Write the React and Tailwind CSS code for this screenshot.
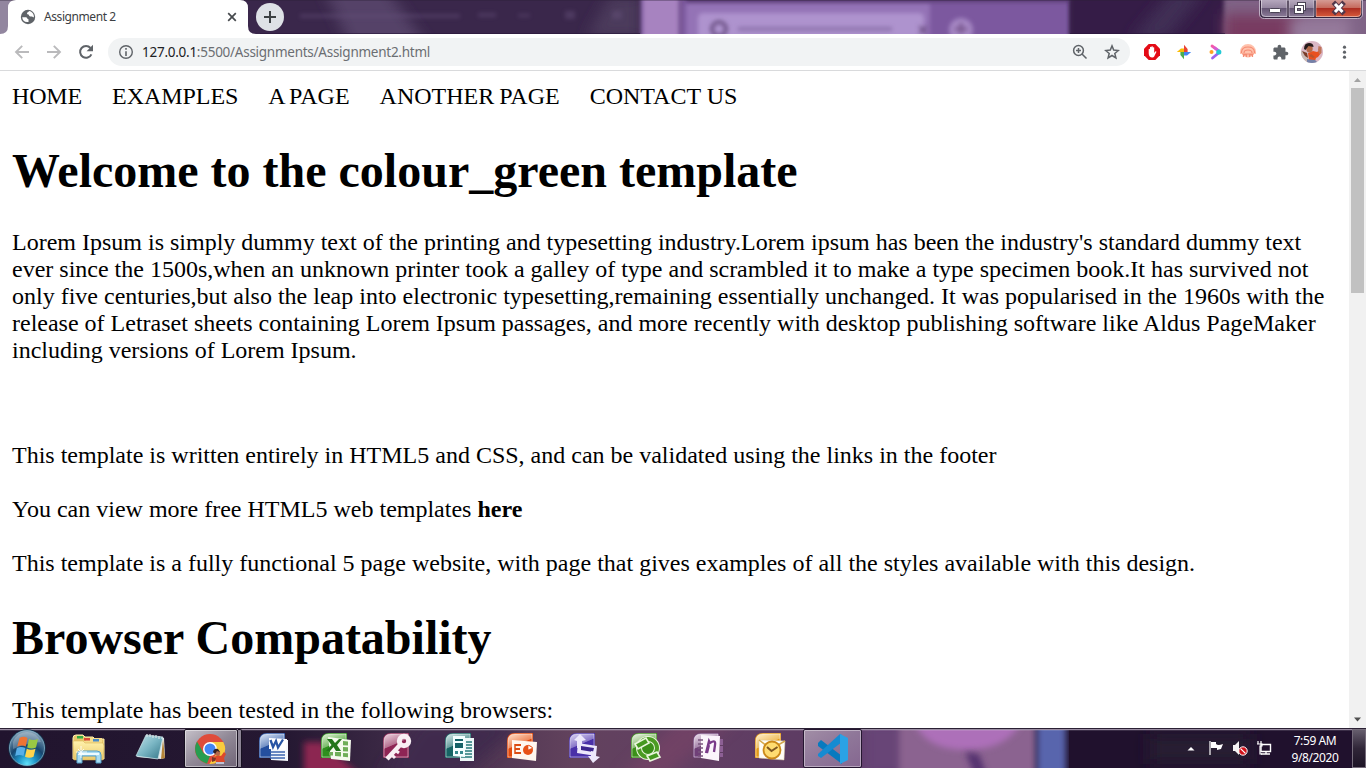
import React from 'react';

const ui = "font-['Noto_Sans','Open_Sans',sans-serif]";

function TitleWallpaper() {
  return (
    <svg className="absolute inset-0" width="1366" height="34" viewBox="0 0 1366 34" preserveAspectRatio="none">
      <defs>
        <filter id="tb" filterUnits="userSpaceOnUse" x="0" y="-20" width="1366" height="80"><feGaussianBlur stdDeviation="2" /></filter>
        <filter id="tb5" filterUnits="userSpaceOnUse" x="0" y="-40" width="1366" height="120"><feGaussianBlur stdDeviation="7" /></filter>
      </defs>
      <rect width="1366" height="34" fill="#3a274b" />
      <rect width="12" height="34" fill="#92869f" />
      <path d="M320-20h60l50 70h-78z" fill="#554268" filter="url(#tb5)" />
      <path d="M610-4h30v42h-54z" fill="#4c3b5b" filter="url(#tb5)" />
      <g fill="#66517b" opacity=".45" filter="url(#tb)">
        <rect x="300" y="14" width="160" height="4" />
        <path d="M478 13h18v4h-18zM518 14h12v3h-12zM565 11h10v8h-10zM612 11h10v8h-10z" />
      </g>
      <rect x="641" y="-10" width="429" height="54" fill="#7c599f" filter="url(#tb)" />
      <rect x="643" y="-10" width="37" height="54" fill="#a783c0" filter="url(#tb)" />
      <rect x="679" y="-10" width="4" height="54" fill="#775593" filter="url(#tb)" />
      <rect x="686" y="3" width="244" height="40" fill="#9473b6" filter="url(#tb)" />
      <rect x="698" y="13" width="226" height="40" rx="5" fill="#ae93ce" filter="url(#tb)" />
      <rect x="686" y="-8" width="384" height="10" fill="#563a71" filter="url(#tb)" />
      <circle cx="719" cy="29" r="7" fill="none" stroke="#705489" strokeWidth="4" filter="url(#tb)" />
      <rect x="738" y="27" width="154" height="4" fill="#8267a0" filter="url(#tb)" opacity=".7" />
      <path d="M919 26l8 8m0-8l-8 8" stroke="#68487f" strokeWidth="2" filter="url(#tb)" />
      <circle cx="961" cy="30" r="12" fill="#a486c2" filter="url(#tb)" />
      <path d="M955 29h12m-6-6v11" stroke="#79598f" strokeWidth="3" filter="url(#tb)" />
      <rect x="1070" y="-10" width="156" height="54" fill="#341f46" filter="url(#tb)" />
      <path d="M1130 40l42-50h34l-40 50z" fill="#412d55" filter="url(#tb5)" />
      <rect x="1224" y="-10" width="160" height="60" fill="#7f6486" filter="url(#tb)" />
      <rect x="1224" y="14" width="75" height="40" fill="#783a60" filter="url(#tb5)" />
      <rect x="1290" y="18" width="60" height="26" fill="#967a9b" filter="url(#tb5)" />
      <path d="M0 .5h1366" stroke="#2b2035" opacity=".35" />
      <path d="M260 33.500h380M1070 33.500h155" stroke="#28163a" opacity=".6" />
    </svg>
  );
}

function WindowControls() {
  return (
    <svg className="relative -mr-px" width="108" height="20" viewBox="0 0 108 20">
      <defs>
        <linearGradient id="glass" x1="0" x2="0" y1="0" y2="1"><stop offset="0" stopColor="#b5a7bd" /><stop offset=".47" stopColor="#94859f" /><stop offset=".5" stopColor="#665675" /><stop offset="1" stopColor="#8b7b98" /></linearGradient>
        <linearGradient id="closeG" x1="0" x2="0" y1="0" y2="1"><stop offset="0" stopColor="#d59b94" /><stop offset=".45" stopColor="#c66b5e" /><stop offset=".5" stopColor="#ad2e22" /><stop offset="1" stopColor="#d85b3c" /></linearGradient>
      </defs>
      <path d="M.5 0v14q0 4.500 5 4.500h93q5 0 5-4.500V0z" fill="#352540" stroke="#e0d4e5" strokeOpacity=".75" />
      <path d="M2 0h26v17H6q-4 0-4-4z" fill="url(#glass)" />
      <path d="M30 0h25v17H30z" fill="url(#glass)" />
      <path d="M57 0h45v13q0 4-4 4H57z" fill="url(#closeG)" />
      <path d="M2.500 0v13q0 3.500 4 3.500H28V0m2 0v16.500h25V0m2 0v16.500h41q4 0 4-3.500V0" fill="none" stroke="#fff" strokeOpacity=".45" />
      <rect x="10.500" y="8.500" width="11" height="4" rx="1" fill="#fff" stroke="#4a4355" />
      <rect x="38.500" y="2.500" width="8" height="8" fill="#fff" stroke="#4a4355" />
      <rect x="35.500" y="5.500" width="9" height="8" fill="#fff" stroke="#4a4355" />
      <rect x="38.500" y="8.500" width="3" height="2" fill="#81738e" stroke="#4a4355" />
      <path d="M76 4l7.500 8m0-8l-7.500 8" stroke="#51374a" strokeWidth="4.800" strokeLinecap="square" />
      <path d="M76 4l7.500 8m0-8l-7.500 8" stroke="#fff" strokeWidth="3" />
    </svg>
  );
}

function TabStrip() {
  return (
    <div className="relative flex h-[34px] shrink-0 overflow-hidden">
      <TitleWallpaper />
      <div className="relative flex h-[34px] w-[256px] shrink-0 items-center pl-5">
        <svg className="absolute left-0 top-0" width="256" height="34" viewBox="0 0 256 34"><path d="M0 34q8 0 8-8V8q0-8 8-8h224q8 0 8 8v18q0 8 8 8z" fill="#fff" /></svg>
        <svg className="relative" width="16" height="16" viewBox="0 0 16 16">
          <circle cx="8" cy="8" r="7.200" fill="#5f6368" />
          <path d="M2.200 8.200h3.600c1.700 0 1.200 2 2.700 2v2.700c-3.700.8-6-1.500-6.300-4.700zM9 1.900c-.2 1.500-2 .8-2 2.300 0 .9.800 1.300 1.600 1.300.5 1.700 1.500 2 3 2 .9 0 1.200.8 2.300.8.4-3-1.700-5.700-4.900-6.400z" fill="#fff" />
        </svg>
        <span className={`relative ml-2 w-[180px] whitespace-nowrap text-[12px] tracking-[-0.42px] text-[#3c4043] ${ui}`}>Assignment 2</span>
        <svg className="relative" width="16" height="16" viewBox="0 0 16 16"><path d="M4.200 4.200l7.600 7.600m0-7.600l-7.600 7.600" stroke="#46494d" strokeWidth="1.700" /></svg>
      </div>
      <svg className="relative mt-[3px]" width="28" height="28" viewBox="0 0 28 28"><circle cx="14" cy="14" r="14" fill="#dee1e6" /><path d="M8 14h12M14 8v12" stroke="#3c4043" strokeWidth="2" /></svg>
      <div className="grow" />
      <WindowControls />
    </div>
  );
}

function Avatar() {
  return (
    <svg width="22" height="22" viewBox="0 0 22 22">
      <defs><clipPath id="av"><circle cx="11" cy="11" r="11" /></clipPath></defs>
      <g clipPath="url(#av)">
        <rect width="22" height="22" fill="#dab7c5" />
        <path d="M0 10l6 1 2 11H0z" fill="#c9b9b4" />
        <path d="M7 12l5-2 4 1 3-2 1 3-3 4-2 1-1 3-6-1z" fill="#e8501f" />
        <path d="M17.500 5l3 1v6l-2.500 1-1-4z" fill="#c07458" />
        <ellipse cx="8.500" cy="7.800" rx="3.200" ry="3.600" fill="#b56a49" />
        <path d="M3 8q0-6 5-6 4.500 0 4.500 4l-5-1-3 4z" fill="#271b1c" />
        <path d="M1 10l5 2 1 5-3-2z" fill="#7a3c28" />
        <path d="M6 18l8 1 3 3H6z" fill="#7581a8" />
        <path d="M10 13l4 3-2 1-4-2z" fill="#b9532e" />
      </g>
    </svg>
  );
}

function Toolbar() {
  return (
    <div className="flex h-9 shrink-0 items-center bg-white pl-[14px]">
      <svg width="16" height="16" viewBox="0 0 16 16" fill="none" stroke="#bababc" strokeWidth="1.900"><path d="M15 8H2.300M8.200 1.800L2 8l6.200 6.200" /></svg>
      <svg className="ml-4" width="16" height="16" viewBox="0 0 16 16" fill="none" stroke="#bababc" strokeWidth="1.900"><path d="M1 8h12.700M7.800 1.800L14 8l-6.200 6.200" /></svg>
      <svg className="ml-4" width="16" height="16" viewBox="0 0 16 16"><path d="M13.400 10.300A5.900 5.900 0 1 1 12.500 4" fill="none" stroke="#5f6368" strokeWidth="2" /><path d="M15 .8v6.400H8.600z" fill="#5f6368" /></svg>
      <div className="ml-[14px] flex h-7 w-[1022px] items-center rounded-full bg-[#f1f3f4] pl-[10px]">
        <svg width="16" height="16" viewBox="0 0 16 16"><circle cx="8" cy="8" r="6.300" fill="none" stroke="#5f6368" strokeWidth="1.400" /><path d="M8 7.200V12M8 4v1.800" stroke="#5f6368" strokeWidth="1.600" /></svg>
        <span className={`ml-2 grow whitespace-nowrap text-[13.5px] tracking-[-0.26px] text-[#6b6e72] ${ui}`}><span className="text-[#202124]">127.0.0.1</span>:5500/Assignments/Assignment2.html</span>
        <svg width="16" height="16" viewBox="0 0 16 16" fill="none" stroke="#5f6368" strokeWidth="1.500"><circle cx="6.500" cy="6.500" r="4.900" /><path d="M10 10l4.500 4.500M4 6.500h5M6.500 4v5" /></svg>
        <svg className="ml-4 mr-[10px]" width="16" height="16" viewBox="0 0 16 16"><path d="M8 1.900l1.700 4.200 4.600.4-3.500 3 1.100 4.400L8 11.500l-3.900 2.400 1.100-4.400-3.500-3 4.600-.4z" fill="none" stroke="#5f6368" strokeWidth="1.500" /></svg>
      </div>
      <svg className="ml-[14px]" width="16" height="16" viewBox="0 0 16 16"><path d="M4.700 0h6.600L16 4.700v6.600L11.300 16H4.700L0 11.300V4.700z" fill="#e40b16" /><path d="M4.700 9.500V5.200q.7-.9 1.300 0V8V3.200q.7-.8 1.400 0V7.500V2.600q.7-.8 1.400 0V7.500V3.500q.8-.7 1.400 0V9l1.300-1.700q1-.3.900.6L10.200 12.500q-.6 1.100-1.900 1.100-3.400 0-3.600-4.100z" fill="#fff" /></svg>
      <svg className="ml-4" width="16" height="16" viewBox="0 0 16 16"><path d="M8 8V.8L11.600 5V8z" fill="#ea4335" /><path d="M8 8V4.500h6.500L11.500 8z" fill="#ea4335" opacity="0" /><path d="M8 8h7.200L11 11.600H8z" fill="#4285f4" /><path d="M8 8v7.200L4.400 11V8z" fill="#4caf50" /><path d="M8 8H.8L5 4.400h3z" fill="#fbbc05" /></svg>
      <svg className="ml-4" width="16" height="16" viewBox="0 0 16 16" fill="none" strokeWidth="2.800"><path d="M4 2l5 3.600" stroke="#f45aaa" strokeLinecap="round" /><path d="M6 3.400L11 7" stroke="#d35ed5" /><path d="M4.500 14L10 9.500" stroke="#9d62ee" strokeLinecap="round" /><circle cx="10.800" cy="8" r="2.600" fill="#22c9d5" /><circle cx="3.500" cy="8" r="2" fill="#ffa123" /></svg>
      <svg className="ml-4" width="16" height="16" viewBox="0 0 16 16" fill="none" stroke="#f58b73"><path d="M0 10V8a8 8 0 0 1 16 0v2h-3q-1 3.500-5 3.500T3 10z" fill="#ffc2ac" stroke="none" /><path d="M1.500 9V8q.5-5 6.500-5t6.500 5v1M4 9q0-3 4-3t4 3M2 10h12M3.500 13v-2h3v2m3 0v-2h3v2" strokeWidth="1.200" /></svg>
      <svg className="ml-4" width="17" height="17" viewBox="0 0 24 24" fill="#5f6368"><path d="M20.500 11H19V7c0-1.100-.9-2-2-2h-4V3.500C13 2.120 11.880 1 10.500 1S8 2.120 8 3.500V5H4c-1.100 0-1.990.9-1.990 2v3.800H3.500c1.490 0 2.700 1.210 2.700 2.700s-1.210 2.700-2.700 2.700H2V20c0 1.100.9 2 2 2h3.800v-1.500c0-1.490 1.210-2.700 2.700-2.700s2.700 1.210 2.700 2.700V22H17c1.100 0 2-.9 2-2v-4h1.500c1.380 0 2.500-1.120 2.500-2.500S21.880 11 20.500 11z" /></svg>
      <div className="ml-3"><Avatar /></div>
      <svg className="ml-[13px]" width="16" height="16" viewBox="0 0 16 16" fill="#5f6368"><circle cx="8.500" cy="3.200" r="1.600" /><circle cx="8.500" cy="8.200" r="1.600" /><circle cx="8.500" cy="13.200" r="1.600" /></svg>
    </div>
  );
}

function Scrollbar() {
  return (
    <div className="flex w-[17px] shrink-0 flex-col items-center bg-[#f1f1f1]">
      <svg width="17" height="17" viewBox="0 0 17 17"><path d="M5 11l3.500-4 3.500 4z" fill="#a3a3a3" /></svg>
      <div className="h-[205px] w-[13px] bg-[#c1c1c1]" />
      <div className="grow" />
      <svg width="17" height="17" viewBox="0 0 17 17"><path d="M5 6.500l3.500 4 3.500-4z" fill="#505050" /></svg>
    </div>
  );
}

function Page() {
  return (
    <main className="grow overflow-hidden whitespace-nowrap p-3 font-['Liberation_Serif',serif] text-[24px] leading-[27px] text-black">
      <nav className="flex gap-[30px]">
        <a className="tracking-[-0.15px]">HOME</a>
        <a className="tracking-[-0.05px]">EXAMPLES</a>
        <a className="[word-spacing:-1.3px]">A PAGE</a>
        <a className="[word-spacing:-1px]">ANOTHER PAGE</a>
        <a>CONTACT US</a>
      </nav>
      <h1 className="mb-[31px] mt-[33px] text-[48px] font-bold leading-[55px]">Welcome to the colour_green template</h1>
      <p>
        Lorem Ipsum is simply dummy text of the printing and typesetting industry.Lorem ipsum has been the industry's standard dummy text<br />
        ever since the 1500s,when an unknown printer took a galley of type and scrambled it to make a type specimen book.It has survived not<br />
        only five centuries,but also the leap into electronic typesetting,remaining essentially unchanged. It was popularised in the 1960s with the<br />
        release of Letraset sheets containing Lorem Ipsum passages, and more recently with desktop publishing software like Aldus PageMaker<br />
        including versions of Lorem Ipsum.
      </p>
      <p className="mt-[78px]">This template is written entirely in HTML5 and CSS, and can be validated using the links in the footer</p>
      <p className="mt-[27px]">You can view more free HTML5 web templates <b>here</b></p>
      <p className="mt-[27px]">This template is a fully functional 5 page website, with page that gives examples of all the styles available with this design.</p>
      <h1 className="mb-8 mt-[33px] text-[48px] font-bold leading-[55px]">Browser Compatability</h1>
      <p>This template has been tested in the following browsers:</p>
    </main>
  );
}

function TaskWallpaper() {
  return (
    <svg className="absolute inset-0" width="1366" height="40" viewBox="0 0 1366 40" preserveAspectRatio="none">
      <defs>
        <linearGradient id="tw" x1="0" x2="1366" y1="0" y2="0" gradientUnits="userSpaceOnUse">
          <stop offset="0" stopColor="#21142e" /><stop offset=".21" stopColor="#251832" /><stop offset=".3" stopColor="#402c49" /><stop offset=".42" stopColor="#62425d" /><stop offset=".5" stopColor="#623f63" /><stop offset=".64" stopColor="#5b3a63" /><stop offset=".76" stopColor="#21112e" /><stop offset=".9" stopColor="#20162a" /><stop offset="1" stopColor="#21142d" />
        </linearGradient>
        <filter id="kb" filterUnits="userSpaceOnUse" x="0" y="-40" width="1366" height="120"><feGaussianBlur stdDeviation="3" /></filter>
        <filter id="kb8" filterUnits="userSpaceOnUse" x="0" y="-60" width="1366" height="160"><feGaussianBlur stdDeviation="8" /></filter>
      </defs>
      <rect width="1366" height="40" fill="url(#tw)" />
      <path d="M304 14h18l46 40h-64z" fill="#8c2751" filter="url(#kb)" />
      <path d="M420-10h110l-70 60h-80z" fill="#402a4d" filter="url(#kb8)" />
      <path d="M620 50l60-60h55l-70 60z" fill="#7e4567" opacity=".55" filter="url(#kb8)" />
      <path d="M860-10h50v62h-50z" fill="#674477" filter="url(#kb8)" />
      <path d="M899-10h137v64H899z" fill="#8b6390" filter="url(#kb)" />
      <path d="M914-6h108q-16 28-56 28T914-6z" fill="#ad70b9" filter="url(#kb)" />
      <path d="M965 24l14 2 8 22h-12z" fill="#54336f" filter="url(#kb)" />
      <path d="M1037-10h29v62h-29z" fill="#5865ad" filter="url(#kb)" />
      <rect x="1069" y="0" width="297" height="40" fill="#20112d" />
      <rect x="1150" y="6" width="100" height="30" fill="#261b30" filter="url(#kb8)" />
      <path d="M0 .5h1366" stroke="#2a2034" /><path d="M0 1.500h1366" stroke="#9a8ca2" />
      <path d="M0 2.500h1366" stroke="#fff" opacity=".12" />
    </svg>
  );
}

const officeTiles = [
  { id: 'w', a: '#dce8f7', b: '#244f9f' },
  { id: 'x', a: '#dff4d2', b: '#2f8f1e' },
  { id: 'a', a: '#edd5e0', b: '#8e2555' },
  { id: 'p', a: '#d5ebea', b: '#176565' },
  { id: 't', a: '#ffe1cb', b: '#e24a0d' },
  { id: 's', a: '#ddd5f3', b: '#4930a8' },
  { id: 'g', a: '#f0f8e8', b: '#3b8f19' },
  { id: 'n', a: '#eee1ee', b: '#704078' },
  { id: 'o', a: '#fff1cc', b: '#e49a16' },
];

function OfficeGlyph({ id }) {
  switch (id) {
    case 'w': return <g><path d="M14 9h17v21l-17-1z" fill="#f4f7fc" /><path d="M12 7l18 1-1 11-17-1z" fill="#fff" /><path d="M13.500 9l2.500 7 3-6 2 6.500 5-8" fill="none" stroke="#2855a4" strokeWidth="2.300" /><path d="M13 21h15M13 24h15M13 27h15" stroke="#3c65af" strokeWidth="1.700" /></g>;
    case 'x': return <g><path d="M9 6l23 3-1 21-19-2z" fill="#f5faee" /><g fill="#6fae58"><path d="M24 10l5 .5v4l-5-.3zM24 16l5 .2v4.200l-5-.2zM24 22l5 .3v4l-5-.5zM16 21h6v4.500l-6-.4zM10 21h4v3.600h-4z" /></g><path d="M8 8h5l3 4 4-4h3l-5 6 4 6h-5l-2.500-4L11 20H7l5.500-6z" fill="#23761b" /></g>;
    case 'a': return <g fill="none" stroke="#f8eff4"><circle cx="23" cy="10" r="4.700" strokeWidth="5" /><path d="M19 14L6 28" strokeWidth="4.500" /><path d="M10 23l4 4M14 19l4 3" strokeWidth="3" /></g>;
    case 'p': return <g><path d="M17 7h14v23H17z" fill="#edf7f7" /><path d="M23 11h6M23 14h6M23 17h6M18 20h11M18 23h11M18 26h11" stroke="#257b7b" strokeWidth="1.700" /><path d="M10 5h12v21l-12-1z" fill="#f4ffff" /><path d="M12 8h8v2h-8zM12 12h8v5h-8z" fill="#156267" /><path d="M12 20h3v3h-3zM17 20h3v3h-3z" fill="#35898d" /></g>;
    case 't': return <g><path d="M7 9l25 2-1 19-24-3z" fill="#fff6ef" /><path d="M10 14h6M10 18h5M10 22h6" stroke="#dc4c13" strokeWidth="2" /><path d="M10 13v10" stroke="#dc4c13" strokeWidth="1.500" /><circle cx="23" cy="19" r="5" fill="#e75118" /><path d="M23 19v-5l5 3z" fill="#fff" stroke="#e75118" strokeWidth=".7" /></g>;
    case 's': return <g fill="#ece7fa"><path d="M13 3l6 6-4 1v7h-5v-7L7 9z" /><path d="M11 12l19 3-1 10-19-3z" /><path d="M14 15l13 2-1 4-12-2z" fill="#3c258d" /><path d="M24 20l5 1v4l4 1-7 6-5-7h3z" /></g>;
    case 'g': return <g fill="none" stroke="#e9f5dc"><circle cx="19" cy="17" r="9" strokeWidth="6" /><circle cx="19" cy="17" r="9" stroke="#4b9b22" strokeWidth="4" /><path d="M6 13l11-6 3 5-11 6zM18 25l10-4 3 5-10 4z" fill="#459820" strokeWidth="1.600" /></g>;
    case 'n': return <g><path d="M10 4l19 1-1 25-18-3z" fill="#fbf5fb" /><path d="M29 8h3v6h-3zM29 15h3v6h-3zM29 22h3v4h-3z" fill="#8c5f94" /><path d="M7 9h5M7 13h5M7 17h5M7 21h5M7 25h5" stroke="#79557e" strokeWidth="1.500" /><path d="M15 22l3-12 1 2q6-4 5 2l-1 7M18 14l-2 8" fill="none" stroke="#793a89" strokeWidth="2.300" /></g>;
    default: return <g><path d="M6 9l26 1-1 19-25-2z" fill="#fffdf6" stroke="#d8c8a2" strokeWidth=".5" /><path d="M6 9l12 9 14-8" fill="none" stroke="#d5a84d" strokeWidth="1.500" /><circle cx="19" cy="19" r="8.500" fill="#ffdc71" stroke="#cc8a1a" strokeWidth="1.800" /><path d="M14 16l4.500 4 6-4" fill="none" stroke="#7d5620" strokeWidth="2" /></g>;
  }
}

function OfficeIcon({ tile }) {
  const gid = `of-${tile.id}`;
  return (
    <svg className="mr-[3px]" width="34" height="34" viewBox="0 0 34 34">
      <defs><linearGradient id={gid} x1="0" y1="0" x2=".45" y2="1"><stop offset="0" stopColor={tile.a} /><stop offset=".5" stopColor={tile.a} stopOpacity=".45" /><stop offset=".55" stopColor={tile.b} /><stop offset="1" stopColor={tile.b} /></linearGradient></defs>
      <path d="M10 2h18v25H2V10q0-8 8-8z" fill={tile.b} />
      <path d="M10 3h17v23H3V10q0-7 7-7z" fill={`url(#${gid})`} stroke="#fff" strokeOpacity=".6" strokeWidth=".8" />
      <OfficeGlyph id={tile.id} />
    </svg>
  );
}

function StartOrb() {
  return (
    <svg width="40" height="40" viewBox="0 0 40 40">
      <defs>
        <radialGradient id="orb" cx=".5" cy=".95" r=".95"><stop offset="0" stopColor="#5fe1fa" /><stop offset=".28" stopColor="#1c91c5" /><stop offset=".55" stopColor="#17466f" /><stop offset="1" stopColor="#8da9bd" /></radialGradient>
      </defs>
      <circle cx="20" cy="20" r="18.700" fill="#14314b" /><circle cx="20" cy="20" r="17.500" fill="url(#orb)" stroke="#8dbdd4" strokeOpacity=".7" />
      <path d="M6 14Q10 4 20 4t14 10q-14 1-28 7z" fill="#fff" opacity=".22" />
      <path d="M12.500 10q4-2.500 8 0l-1.800 8.500q-4-2-8.500 0z" fill="#ee7434" /><path d="M22 11q4 2 9 0l-2 8.500q-4 2-8.800 0z" fill="#9ac943" /><path d="M9.800 20q4-2 8.500 0l-1.800 8q-4-2-8.300 0z" fill="#58afe8" /><path d="M19.800 20.800q4 2 8.700 0l-2 8q-4 2-8.500 0z" fill="#ffd44d" />
    </svg>
  );
}

function ExplorerIcon() {
  return (
    <svg width="34" height="34" viewBox="0 0 34 34">
      <defs><linearGradient id="fold" x1="0" x2="0" y1="0" y2="1"><stop stopColor="#fff2ad" /><stop offset="1" stopColor="#eac869" /></linearGradient></defs>
      <path d="M1 5q0-3 3-3h7l2 2h8l2 2h9v20H1z" fill="#e7c66c" stroke="#fff1b0" /><path d="M3 8h11V5h16v21H3z" fill="#f6dc8b" />
      <path d="M5 3h6v2.500H5z" fill="#32aa42" /><path d="M12 5h6v2.500h-6z" fill="#db4738" /><path d="M21 6h6v2.500h-6z" fill="#4a8cc7" />
      <path d="M1 8h10l2 2h18l1 3-1 14H2z" fill="url(#fold)" stroke="#d5ae4b" strokeWidth=".5" />
      <path d="M5 30V21q0-3 3-3h17q4 0 4 4v8h-5v-7H10v7z" fill="#a9dcf2" stroke="#559ec7" /><path d="M7 21h20" stroke="#edfbff" strokeWidth="2" /><path d="M9 13v12M4 19h11M6 16l6 6m0-6l-6 6" stroke="#fff" opacity=".8" />
    </svg>
  );
}

function NotepadIcon() {
  return (
    <svg width="34" height="34" viewBox="0 0 34 34">
      <defs><linearGradient id="note" x1="0" y1="0" x2="1" y2="1"><stop stopColor="#c3e4eb" /><stop offset=".5" stopColor="#79b5c3" /><stop offset="1" stopColor="#337587" /></linearGradient></defs>
      <path d="M12 5l18 2 1 20-4 1L3 26z" fill="#e8ecec" /><path d="M29 8l2 19-4 1z" fill="#b58438" />
      <path d="M12 4l17 2-5 22-22-3z" fill="url(#note)" stroke="#cce5e9" strokeWidth=".7" />
      <path d="M13 3v3m3-3v3m3-2v3m3-3v3m3-2v3m3-2v2" stroke="#d6e3e5" strokeWidth="1.200" />
    </svg>
  );
}

function ChromeIcon() {
  return (
    <svg width="34" height="36" viewBox="0 0 34 36">
      <circle cx="16" cy="18" r="15" fill="#df4c3b" />
      <path d="M3 10.500L9.500 22 16 25l-3 7.500A15 15 0 0 1 3 10.500z" fill="#279d50" />
      <path d="M16 11h13.300a15 15 0 0 1-14 22L23 22z" fill="#f9cc3d" />
      <circle cx="16" cy="18" r="7" fill="#fff" /><circle cx="16" cy="18" r="5.500" fill="#4386f4" />
      <path d="M20 26l4-2 3 1 3-4 2 2-2 4 1 4-6 1-3-1z" fill="#dc492b" /><circle cx="23.500" cy="22" r="2.700" fill="#b5694a" /><path d="M19 21q1-4 5-3l2 3-3-1-2 3z" fill="#322022" /><path d="M18 26l4 1-1 3-3 1z" fill="#7c3529" /><path d="M22 31h8v2h-8z" fill="#bdc1d4" />
    </svg>
  );
}

function CodeIcon() {
  return (
    <svg width="34" height="34" viewBox="0 0 34 34">
      <path d="M2 11l3-3 21 16v8L2 14z" fill="#087abf" /><path d="M2 22l22-20 2 1v7L5 26l-3-2z" fill="#168bd2" /><path d="M24 2l8 4v22l-8 4z" fill="#2aa2e5" />
    </svg>
  );
}

function Taskbar() {
  return (
    <footer className="relative flex h-10 shrink-0 overflow-hidden">
      <TaskWallpaper />
      <div className="relative flex w-[58px] shrink-0 justify-center pr-1"><StartOrb /></div>
      <div className="relative flex w-[62px] shrink-0 items-center justify-center pt-1"><ExplorerIcon /></div>
      <div className="relative flex w-[62px] shrink-0 items-center justify-center"><NotepadIcon /></div>
      <div className="relative flex w-[62px] shrink-0 pl-0.5 pt-px">
        <div className="flex h-[39px] w-[54px] items-center justify-center rounded-[2px] border border-[#171020] bg-linear-to-br from-[#c6c1c9] via-[#918997] to-[#706577] shadow-[inset_0_0_0_1px_rgba(255,255,255,.45)]"><ChromeIcon /></div>
        <div className="h-[39px] w-1 rounded-r-[2px] border border-l-0 border-[#171020] bg-[#8c8494]" />
      </div>
      {officeTiles.map((tile) => <div key={tile.id} className="relative flex w-[62px] shrink-0 items-center justify-center"><OfficeIcon tile={tile} /></div>)}
      <div className="relative flex w-[62px] shrink-0 pl-px pt-px">
        <div className="flex h-[39px] w-[59px] items-center justify-center rounded-[2px] border border-[#251630] bg-linear-to-br from-[#a28ea6] via-[#8f7799] to-[#856790] shadow-[inset_0_0_0_1px_rgba(255,255,255,.4)]"><CodeIcon /></div>
      </div>
      <div className="grow" />
      <div className="relative flex items-center">
        <svg width="8" height="16" viewBox="0 0 8 16"><path d="M.5 10.500L4 7l3.500 3.500z" fill="#fff" /></svg>
        <svg className="ml-[13px]" width="16" height="16" viewBox="0 0 16 16"><path d="M2 1v14" stroke="#fff" strokeWidth="1.200" /><path d="M3 2h5v2q2 2 7 0l-2 5-4 1V8H3z" fill="#fff" /></svg>
        <svg className="ml-2" width="16" height="16" viewBox="0 0 16 16"><path d="M1 5h2l4-4v14l-4-4H1z" fill="#f4f4f4" /><circle cx="11" cy="11" r="4.200" fill="#cf1119" stroke="#fff" strokeWidth="1" /><path d="M8.600 8.600l4.800 4.800" stroke="#fff" strokeWidth="1.300" /></svg>
        <svg className="ml-2" width="17" height="16" viewBox="0 0 17 16" fill="none" stroke="#fff"><path d="M5 4.500h9.500v7H5zM5 14h9M10 12v2" strokeWidth="1.400" /><path d="M2 1v3m3-3v3M1 4h5v2H4v8h2" strokeWidth="1.200" /></svg>
      </div>
      <div className={`relative ml-[17px] w-[50px] whitespace-nowrap pt-[4px] text-center text-[12px] leading-[17px] tracking-[-0.4px] text-white ${ui}`}>7:59 AM<br />9/8/2020</div>
      <div className="relative ml-[12px] mt-px h-[39px] w-[14px] border border-[#756c7b] bg-linear-to-b from-[#665e6d] via-[#302638] to-[#1d1426]" />
    </footer>
  );
}

export default function App() {
  return (
    <div className="flex h-[768px] w-[1366px] flex-col overflow-hidden bg-white">
      <TabStrip />
      <Toolbar />
      <div className="flex min-h-0 grow border-t border-[#d9dadc]"><Page /><Scrollbar /></div>
      <Taskbar />
    </div>
  );
}
